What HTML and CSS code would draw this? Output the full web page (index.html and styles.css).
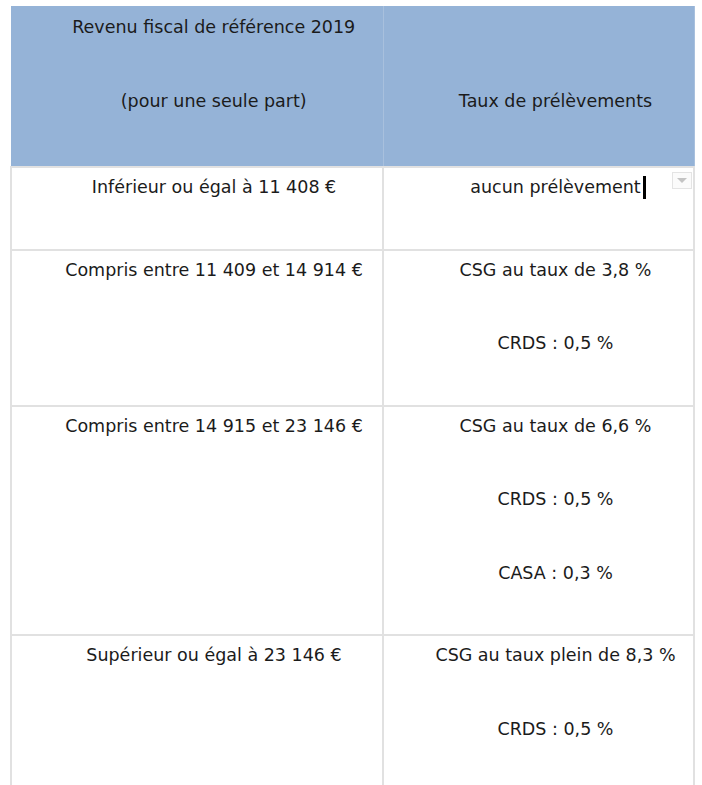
FILE: index.html
```html
<!DOCTYPE html>
<html lang="fr">
<head>
<meta charset="utf-8">
<title>Prélèvements sociaux</title>
<link rel="stylesheet" href="styles.css">
</head>
<body>
<table class="grid">
  <colgroup><col class="c1"><col class="c2"></colgroup>
  <thead>
    <tr>
      <th><p>Revenu fiscal de référence 2019</p><p>(pour une seule part)</p></th>
      <th><p>&nbsp;</p><p>Taux de prélèvements</p></th>
    </tr>
  </thead>
  <tbody>
    <tr>
      <td><p>Inférieur ou égal à 11 408 €</p></td>
      <td class="active"><p><span class="caret-wrap">aucun prélèvement<span class="caret"></span></span></p><span class="dd"></span></td>
    </tr>
    <tr>
      <td><p>Compris entre 11 409 et 14 914 €</p></td>
      <td><p>CSG au taux de 3,8 %</p><p>CRDS : 0,5 %</p></td>
    </tr>
    <tr>
      <td><p>Compris entre 14 915 et 23 146 €</p></td>
      <td><p>CSG au taux de 6,6 %</p><p>CRDS : 0,5 %</p><p>CASA : 0,3 %</p></td>
    </tr>
    <tr>
      <td><p>Supérieur ou égal à 23 146 €</p></td>
      <td><p>CSG au taux plein de 8,3 %</p><p>CRDS : 0,5 %</p><p>&nbsp;</p></td>
    </tr>
  </tbody>
</table>
</body>
</html>
```
FILE: styles.css
```css
html, body {
  margin: 0;
  padding: 0;
  background: #ffffff;
}
body {
  font-family: "DejaVu Sans", "Liberation Sans", sans-serif;
  font-size: 17.5px;
  color: #1b1b1b;
  overflow: hidden;
  height: 785px;
}
.grid {
  margin: 6px 0 0 10px;
  width: 683px;
  border-collapse: collapse;
  table-layout: fixed;
}
.c1 { width: 372px; }
.c2 { width: 311px; }
.grid th, .grid td {
  vertical-align: top;
  text-align: center;
  font-weight: normal;
  position: relative;
}
.grid th {
  background: #95b3d7;
  border-right: 1px solid #a8c0dd;
  padding: 9px 4px 4px 38px;
}
.grid td {
  border: 2px solid #e1e1e1;
  padding: 7px 4px 0 38px;
}
.grid p {
  margin: 0 0 49.5px 0;
  line-height: 24px;
  white-space: nowrap;
}
.caret-wrap { position: relative; }
.caret {
  position: absolute;
  right: -5px;
  top: -1px;
  width: 3px;
  height: 23px;
  background: #000;
}
.dd {
  position: absolute;
  left: 288px;
  top: 4px;
  width: 18px;
  height: 15px;
  border: 1px solid #e4e4e4;
  background: #fbfbfb;
}
.dd::after {
  content: "";
  position: absolute;
  left: 4px;
  top: 5px;
  border-left: 5px solid transparent;
  border-right: 5px solid transparent;
  border-top: 5px solid #c4c4c4;
}
```
